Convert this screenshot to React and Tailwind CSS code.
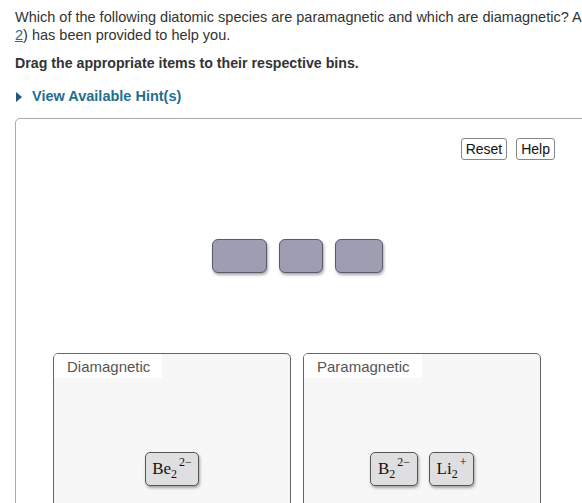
import React from 'react';

const Species = ({ base, sup, w }) => (
  <div
    className={`${w} h-[34px] flex items-center justify-center rounded-[5px] border-[1.5px] border-[#555] bg-[#dfdfe1] shadow-[1px_2px_3px_rgba(0,0,0,0.35)] text-[17px] text-[#111]`}
    style={{ fontFamily: '"Liberation Serif", "DejaVu Serif", serif' }}
  >
    <span className="relative">
      {base}
      <sub className="text-[12px] align-baseline relative top-[4px]">2</sub>
      <sup className="text-[12px] align-baseline relative top-[-8px] ml-[2px]">{sup}</sup>
    </span>
  </div>
);

const Bin = ({ label, children }) => (
  <div className="w-[238px] h-[180px] rounded-[5px] border border-[#666] bg-[#f7f7f8] flex flex-col">
    <div className="self-start bg-white pl-[13px] pr-[12px] pt-[3px] h-[24px] flex items-center text-[15px] text-[#555] rounded-tl-[4px]">
      {label}
    </div>
    <div className="mt-[74px] flex justify-center gap-[11px]">{children}</div>
  </div>
);

export default function App() {
  return (
    <div
      className="w-[582px] h-[503px] overflow-hidden bg-white pl-[15px] pt-[8px]"
      style={{ fontFamily: '"Liberation Sans", Arial, sans-serif' }}
    >
      <p className="text-[14.5px] leading-[18px] text-[#333] whitespace-nowrap">
        Which of the following diatomic species are paramagnetic and which are diamagnetic? A blank
        <br />
        <span className="text-[#1f6d8c] underline">2</span>) has been provided to help you.
      </p>
      <p className="mt-[10px] text-[14.2px] leading-[18px] font-bold text-[#333]">
        Drag the appropriate items to their respective bins.
      </p>
      <div className="mt-[16px] h-[18px] flex items-center gap-[10px] text-[14.5px] font-bold text-[#236f8d]">
        <svg width="6" height="10" viewBox="0 0 6 10" className="ml-[1px]">
          <path d="M0 0 L6 5 L0 10 Z" fill="#1e5b78" />
        </svg>
        <span>View Available Hint(s)</span>
      </div>
      <div className="mt-[12px] w-[600px] h-[400px] border border-[#aaa] rounded-tl-[5px] pt-[19px]">
        <div className="w-[539px] flex justify-end gap-[9px]">
          <button className="h-[22px] px-[4px] border border-[#888] rounded-[3px] bg-white text-[14px] text-[#111] leading-none">
            Reset
          </button>
          <button className="h-[22px] px-[4px] border border-[#888] rounded-[3px] bg-white text-[14px] text-[#111] leading-none">
            Help
          </button>
        </div>
        <div className="ml-[37px] w-[489px] mt-[79px] flex justify-center gap-[12px]">
          <div className="w-[55px] h-[34px] rounded-[6px] border-[1.5px] border-[#595a6b] bg-[#9e9db1] shadow-[1px_2px_3px_rgba(0,0,0,0.35)]" />
          <div className="w-[44px] h-[34px] rounded-[6px] border-[1.5px] border-[#595a6b] bg-[#9e9db1] shadow-[1px_2px_3px_rgba(0,0,0,0.35)]" />
          <div className="w-[48px] h-[34px] rounded-[6px] border-[1.5px] border-[#595a6b] bg-[#9e9db1] shadow-[1px_2px_3px_rgba(0,0,0,0.35)]" />
        </div>
        <div className="ml-[37px] mt-[80px] flex gap-[12px]">
          <Bin label="Diamagnetic">
            <Species base="Be" sup="2−" w="w-[54px]" />
          </Bin>
          <Bin label="Paramagnetic">
            <Species base="B" sup="2−" w="w-[48px]" />
            <Species base="Li" sup="+" w="w-[45px]" />
          </Bin>
        </div>
      </div>
    </div>
  );
}
